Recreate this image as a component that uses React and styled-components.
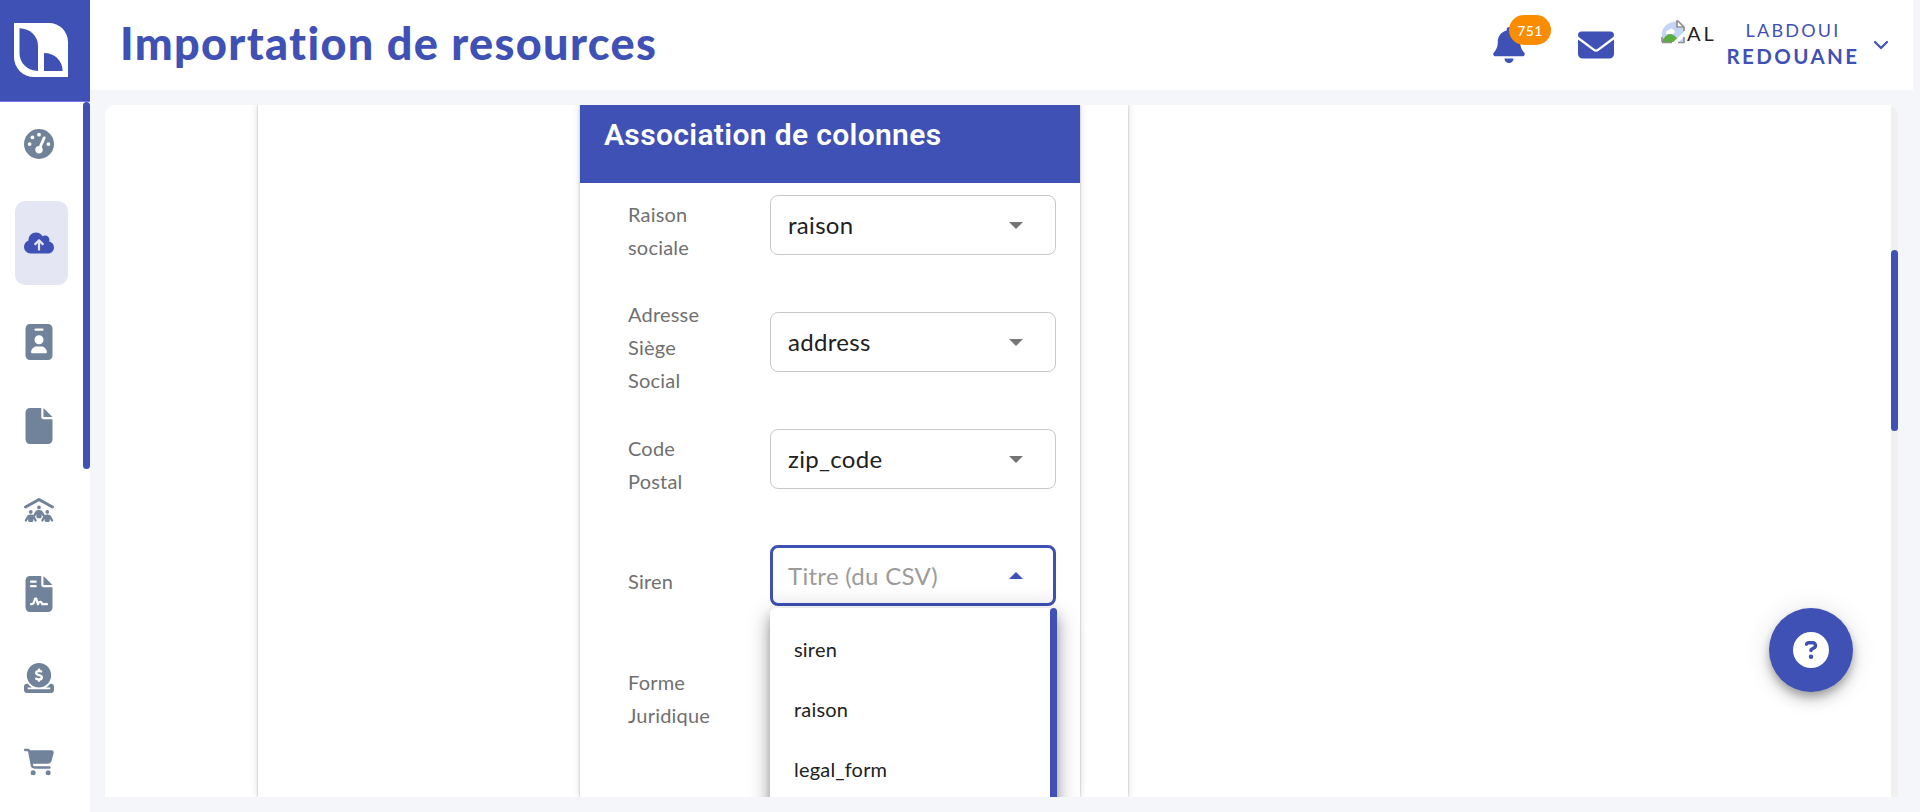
import React from "react";
import styled, { createGlobalStyle } from "styled-components";
import {
  FaGaugeHigh, FaCloudArrowUp, FaIdBadge, FaFile, FaPeopleRoof, FaFileContract,
  FaCircleDollarToSlot, FaCartShopping, FaBell, FaEnvelope, FaCircleQuestion,
} from "react-icons/fa6";

const blue = "#3f51b5";

const Global = createGlobalStyle`
  *, *::before, *::after { box-sizing: border-box; }
  body { margin: 0; background: #f5f6fa; overflow: hidden; font-family: Lato, "Open Sans", sans-serif; }
`;

const Page = styled.div`
  display: flex;
  width: 1920px;
  height: 812px;
  background: #f5f6fa;
`;

const Sidebar = styled.aside`
  display: flex;
  flex-direction: column;
  width: 90px;
  background: #fff;
`;

const LogoBox = styled.div`
  height: 102px;
  padding: 23px 0 0 14px;
  background: ${blue};
  border-bottom: 1px solid #7c74e8;
  svg { display: block; }
`;

const SidebarBody = styled.div`
  display: flex;
  justify-content: space-between;
  flex: 1;
  min-height: 0;
`;

const Nav = styled.nav`
  display: flex;
  flex-direction: column;
  padding-left: 15px;
`;

const NavItem = styled.a`
  display: flex;
  align-items: center;
  justify-content: center;
  flex: none;
  width: 53px;
  height: 84px;
  padding-right: 5px;
  margin-bottom: ${(p) => (p.$gapAfter ? 15 : 0)}px;
  border-radius: 10px;
  color: ${(p) => (p.$active ? blue : "#71839b")};
  background: ${(p) => (p.$active ? "#e4e6f3" : "transparent")};
  svg { width: 30px; height: 36px; }
`;

const Thumb = styled.div`
  width: 7px;
  height: ${(p) => p.$height}px;
  margin-top: ${(p) => p.$top || 0}px;
  border-radius: 4px;
  background: ${blue};
`;

const Main = styled.div`
  display: flex;
  flex-direction: column;
  flex: 1;
`;

const Header = styled.header`
  display: flex;
  align-items: center;
  width: 1823px;
  height: 90px;
  padding: 0 24px 0 30px;
  background: #fff;
  color: ${blue};
`;

const Title = styled.h1`
  flex: 1;
  margin: 0;
  padding-bottom: 4px;
  font-size: 45px;
  line-height: 60px;
  font-weight: 900;
  letter-spacing: 1.35px;
  white-space: nowrap;
`;

const Notifications = styled.div`
  position: relative;
  width: 36px;
  height: 36px;
  svg { display: block; }
`;

const Badge = styled.span`
  position: absolute;
  left: 18px;
  top: -12px;
  width: 42px;
  height: 30px;
  border-radius: 15px;
  background: #fb8c00;
  color: #fff;
  font-size: 14px;
  line-height: 31px;
  font-weight: 500;
  letter-spacing: 0.3px;
  text-align: center;
`;

const Mail = styled.div`
  width: 36px;
  height: 36px;
  margin: 0 47px 0 51px;
  svg { display: block; }
`;

const Avatar = styled.div`
  display: flex;
  gap: 2px;
  width: 65px;
  height: 50px;
  color: #222;
  font-size: 20px;
  line-height: 26px;
  letter-spacing: 3px;
`;

const UserName = styled.div`
  display: flex;
  flex-direction: column;
  align-items: center;
  width: 134px;
  margin-right: 13px;
  padding-bottom: 4px;
  white-space: nowrap;
`;

const FirstLine = styled.span`
  font-size: 18px;
  letter-spacing: 2.2px;
  line-height: 25px;
`;

const LastLine = styled.strong`
  font-size: 20.5px;
  letter-spacing: 2.4px;
  line-height: 26px;
`;

const Content = styled.main`
  display: flex;
  width: 1793px;
  height: 692px;
  margin: 15px 0 0 15px;
  overflow: hidden;
  border-radius: 10px 10px 0 0;
  background: #fff;
`;

const Scroller = styled.div`
  flex: 1;
  padding-left: 153px;
  overflow: hidden;
`;

const Track = styled.div`
  width: 7px;
  background: #f0f0f0;
`;

const OuterCard = styled.section`
  display: flex;
  width: 870px;
  height: 100%;
  padding-left: 322px;
  box-shadow: 0 0 2px rgba(0, 0, 0, 0.25), 0 0 8px rgba(0, 0, 0, 0.15);
`;

const Card = styled.div`
  width: 500px;
  height: 100%;
  box-shadow: 0 0 2px rgba(0, 0, 0, 0.25), 0 0 8px rgba(0, 0, 0, 0.15);
`;

const CardHeader = styled.h2`
  height: 78px;
  margin: 0;
  padding: 12px 24px;
  background: ${blue};
  color: #fff;
  font: 600 30px/36px Roboto, sans-serif;
  letter-spacing: 0.35px;
`;

const Form = styled.div`
  display: flex;
  flex-direction: column;
  gap: 57px;
  padding: 12px 24px 0 48px;
`;

const Row = styled.div`
  display: flex;
  align-items: center;
  flex: none;
  height: 60px;
`;

const Label = styled.label`
  width: 142px;
  padding-top: 11px;
  color: #707070;
  font-size: 20px;
  line-height: 33px;
  letter-spacing: 0.2px;
  white-space: pre-line;
`;

const SelectWrap = styled.div`
  position: relative;
  width: 286px;
  margin-top: ${(p) => (p.$open ? -1 : 0)}px;
`;

const Select = styled.div`
  display: flex;
  align-items: center;
  justify-content: space-between;
  height: ${(p) => (p.$open ? 61 : 60)}px;
  padding: 0 ${(p) => (p.$open ? 30 : 32)}px 0 ${(p) => (p.$open ? 15 : 17)}px;
  border: ${(p) => (p.$open ? `3px solid ${blue}` : "1px solid #c8c8c8")};
  border-radius: 8px;
  background: ${(p) => (p.$open ? "linear-gradient(#fff 70%, #f8f8f8)" : "#fff")};
  color: ${(p) => (p.$open ? "#9b9b9b" : "#212121")};
  font-size: 24px;
  line-height: 30px;
  letter-spacing: 0.3px;
`;

const Caret = styled.span`
  border: 7.5px solid transparent;
  border-top: 7.5px solid #757575;
  border-bottom: 0;
  ${(p) => p.$up && `border-top: 0; border-bottom: 7.5px solid ${blue};`}
`;

const Menu = styled.div`
  position: absolute;
  left: 0;
  top: 63px;
  display: flex;
  justify-content: space-between;
  width: 287px;
  height: 384px;
  border-radius: 6px;
  background: #fff;
  box-shadow: 0 7px 8px -4px rgba(0, 0, 0, 0.2), 0 12px 17px 2px rgba(0, 0, 0, 0.14),
    0 5px 22px 4px rgba(0, 0, 0, 0.12), 0 6px 12px rgba(0, 0, 0, 0.16);
`;

const Options = styled.div`
  padding: 11px 0 0 24px;
`;

const Option = styled.div`
  color: #212121;
  font-size: 20px;
  line-height: 60px;
  letter-spacing: 0.2px;
`;

const HelpButton = styled.button`
  position: fixed;
  left: 1769px;
  top: 608px;
  display: flex;
  align-items: center;
  justify-content: center;
  width: 84px;
  height: 84px;
  padding: 0;
  border: 0;
  border-radius: 50%;
  background: ${blue};
  color: #fff;
  box-shadow: 0 5px 8px -1px rgba(0, 0, 0, 0.25), 0 9px 15px rgba(0, 0, 0, 0.14), 0 2px 27px rgba(0, 0, 0, 0.12);
`;

const nav = [
  { Icon: FaGaugeHigh, gapAfter: true },
  { Icon: FaCloudArrowUp, active: true, gapAfter: true },
  { Icon: FaIdBadge },
  { Icon: FaFile },
  { Icon: FaPeopleRoof },
  { Icon: FaFileContract },
  { Icon: FaCircleDollarToSlot },
  { Icon: FaCartShopping },
];

const fields = [
  { label: "Raison\nsociale", value: "raison" },
  { label: "Adresse\nSiège\nSocial", value: "address" },
  { label: "Code\nPostal", value: "zip_code" },
  { label: "Siren", value: "Titre (du CSV)", open: true },
  { label: "Forme\nJuridique" },
];

const Logo = () => (
  <svg width="54" height="54" viewBox="0 0 54 54">
    <path fill="#fff" d="M0 0H35A19 19 0 0 1 54 19V54H20A20 20 0 0 1 0 34Z" />
    <path fill={blue} d="M5.5 5.3C16 5.6 24 13 24 23V48C13 47.6 5.5 40 5.5 30Z" />
    <path fill={blue} d="M30 30C41 30 48.6 38 48.6 48H30Z" />
  </svg>
);

const BrokenImage = () => (
  <svg width="24" height="24" viewBox="0 0 24 24">
    <path fill="#c3d5f5" d="M1 22V13Q2 3 16 1V8H23V22Z" />
    <path fill="#fff" d="M5 13Q5 10 8 10Q10 7 13 10Q15 12 12 14H5Z" />
    <path fill="#5bad3c" d="M1 22Q4 14 10 14Q15 15 18 22Z" />
    <path fill="#fff" d="M10 24L24 11V16L16 24Z" />
    <path fill="none" stroke="#8d8d8d" strokeWidth="1.6" d="M1 22.5H11M17 22.5H23V17M23 11V7L17 1H16V7H23M1 22V17" />
  </svg>
);

const Field = ({ label, value, open }) => (
  <Row>
    <Label>{label}</Label>
    {value && (
      <SelectWrap $open={open}>
        <Select $open={open}>
          {value}
          <Caret $up={open} />
        </Select>
        {open && (
          <Menu>
            <Options>
              {["siren", "raison", "legal_form"].map((o) => <Option key={o}>{o}</Option>)}
            </Options>
            <Thumb $height={300} />
          </Menu>
        )}
      </SelectWrap>
    )}
  </Row>
);

export default function App() {
  return (
    <Page>
      <Global />
      <Sidebar>
        <LogoBox><Logo /></LogoBox>
        <SidebarBody>
          <Nav>
            {nav.map(({ Icon, active, gapAfter }, i) => (
              <NavItem key={i} $active={active} $gapAfter={gapAfter}><Icon /></NavItem>
            ))}
          </Nav>
          <Thumb $height={367} />
        </SidebarBody>
      </Sidebar>
      <Main>
        <Header>
          <Title>Importation de resources</Title>
          <Notifications>
            <FaBell size={36} />
            <Badge>751</Badge>
          </Notifications>
          <Mail><FaEnvelope size={36} /></Mail>
          <Avatar><BrokenImage />AL</Avatar>
          <UserName>
            <FirstLine>LABDOUI</FirstLine>
            <LastLine>REDOUANE</LastLine>
          </UserName>
          <svg width="16" height="10" viewBox="0 0 16 10">
            <path d="M2 2L8 8L14 2" fill="none" stroke={blue} strokeWidth="2.2" strokeLinecap="round" strokeLinejoin="round" />
          </svg>
        </Header>
        <Content>
          <Scroller>
            <OuterCard>
              <Card>
                <CardHeader>Association de colonnes</CardHeader>
                <Form>
                  {fields.map((f) => <Field key={f.label} {...f} />)}
                </Form>
              </Card>
            </OuterCard>
          </Scroller>
          <Track><Thumb $height={181} $top={145} /></Track>
        </Content>
      </Main>
      <HelpButton aria-label="Aide"><FaCircleQuestion size={36} /></HelpButton>
    </Page>
  );
}
